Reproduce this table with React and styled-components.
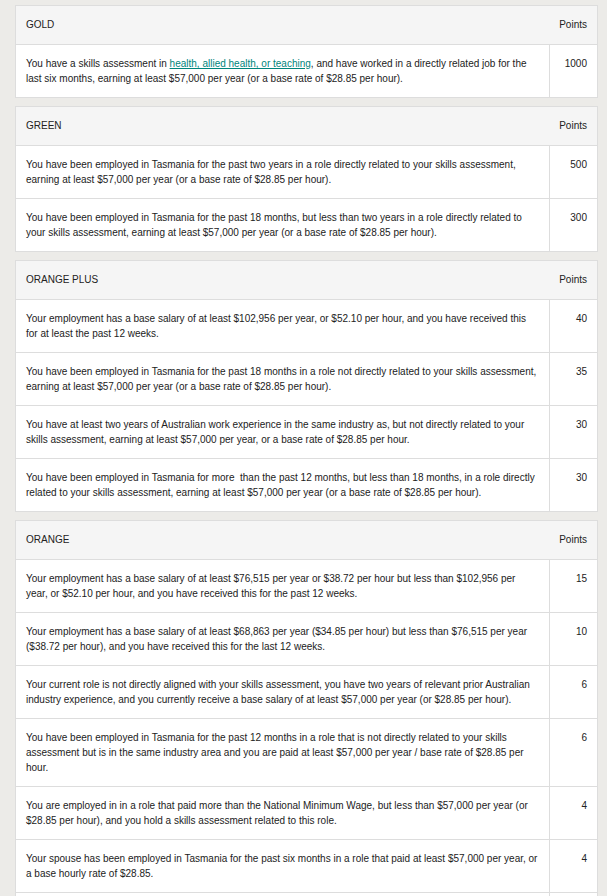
import styled, { createGlobalStyle } from "styled-components";

const GlobalStyle = createGlobalStyle`
  html, body {
    margin: 0;
    padding: 0;
    background: #ecebe8;
  }
  body {
    font-family: "Liberation Sans", Arial, sans-serif;
    color: #222;
  }
`;

const sections = [
  {
    title: "GOLD",
    rows: [
      {
        text: (
          <>
            You have a skills assessment in{" "}
            <a href="#health">health, allied health, or teaching</a>, and have
            worked in a directly related job for the last six months, earning
            at least $57,000 per year (or a base rate of $28.85 per hour).
          </>
        ),
        points: 1000,
      },
    ],
  },
  {
    title: "GREEN",
    rows: [
      {
        text: "You have been employed in Tasmania for the past two years in a role directly related to your skills assessment, earning at least $57,000 per year (or a base rate of $28.85 per hour).",
        points: 500,
      },
      {
        text: "You have been employed in Tasmania for the past 18 months, but less than two years in a role directly related to your skills assessment, earning at least $57,000 per year (or a base rate of $28.85 per hour).",
        points: 300,
      },
    ],
  },
  {
    title: "ORANGE PLUS",
    rows: [
      {
        text: "Your employment has a base salary of at least $102,956 per year, or $52.10 per hour, and you have received this for at least the past 12 weeks.",
        points: 40,
      },
      {
        text: "You have been employed in Tasmania for the past 18 months in a role not directly related to your skills assessment, earning at least $57,000 per year (or a base rate of $28.85 per hour).",
        points: 35,
      },
      {
        text: "You have at least two years of Australian work experience in the same industry as, but not directly related to your skills assessment, earning at least $57,000 per year, or a base rate of $28.85 per hour.",
        points: 30,
      },
      {
        text: "You have been employed in Tasmania for more \u00a0than the past 12 months, but less than 18 months, in a role directly related to your skills assessment, earning at least $57,000 per year (or a base rate of $28.85 per hour).",
        points: 30,
      },
    ],
  },
  {
    title: "ORANGE",
    rows: [
      {
        text: "Your employment has a base salary of at least $76,515 per year or $38.72 per hour but less than $102,956 per year, or $52.10 per hour, and you have received this for the past 12 weeks.",
        points: 15,
      },
      {
        text: "Your employment has a base salary of at least $68,863 per year ($34.85 per hour) but less than $76,515 per year ($38.72 per hour), and you have received this for the last 12 weeks.",
        points: 10,
      },
      {
        text: "Your current role is not directly aligned with your skills assessment, you have two years of relevant prior Australian industry experience, and you currently receive a base salary of at least $57,000 per year (or $28.85 per hour).",
        points: 6,
      },
      {
        text: "You have been employed in Tasmania for the past 12 months in a role that is not directly related to your skills assessment but is in the same industry area and you are paid at least $57,000 per year / base rate of $28.85 per hour.",
        points: 6,
      },
      {
        text: "You are employed in in a role that paid more than the National Minimum Wage, but less than $57,000 per year (or $28.85 per hour), and you hold a skills assessment related to this role.",
        points: 4,
      },
      {
        text: "Your spouse has been employed in Tasmania for the past six months in a role that paid at least $57,000 per year, or a base hourly rate of $28.85.",
        points: 4,
      },
      {
        text: "You have lived in Tasmania for the past 12 months.",
        points: 2,
      },
    ],
  },
];

export default function App() {
  return (
    <>
      <GlobalStyle />
      <Page>
        {sections.map((section) => (
          <PointsTable key={section.title}>
            <thead>
              <tr>
                <HeadCell>{section.title}</HeadCell>
                <HeadCell $right>Points</HeadCell>
              </tr>
            </thead>
            <tbody>
              {section.rows.map((row, i) => (
                <tr key={i}>
                  <TextCell>{row.text}</TextCell>
                  <PointsCell>{row.points}</PointsCell>
                </tr>
              ))}
            </tbody>
          </PointsTable>
        ))}
      </Page>
    </>
  );
}

const Page = styled.div`
  padding: 5px 9px 0 15px;
`;

const PointsTable = styled.table`
  width: 583px;
  border-collapse: collapse;
  background: #fff;
  border: 1px solid #dddddd;
  margin-bottom: 8px;
  font-size: 10px;
  line-height: 15px;
`;

const HeadCell = styled.th`
  background: #f5f5f5;
  border-bottom: 1px solid #dddddd;
  padding: 11px 10px 12px 10px;
  font-weight: normal;
  text-align: ${(p) => (p.$right ? "right" : "left")};
  color: #222;
`;

const TextCell = styled.td`
  padding: 11px 10px;
  border-bottom: 1px solid #dddddd;
  vertical-align: top;
  a {
    color: #00857c;
    text-decoration: underline;
  }
`;

const PointsCell = styled.td`
  width: 27px;
  padding: 11px 10px;
  border-bottom: 1px solid #dddddd;
  border-left: 1px solid #dddddd;
  text-align: right;
  vertical-align: top;
`;
